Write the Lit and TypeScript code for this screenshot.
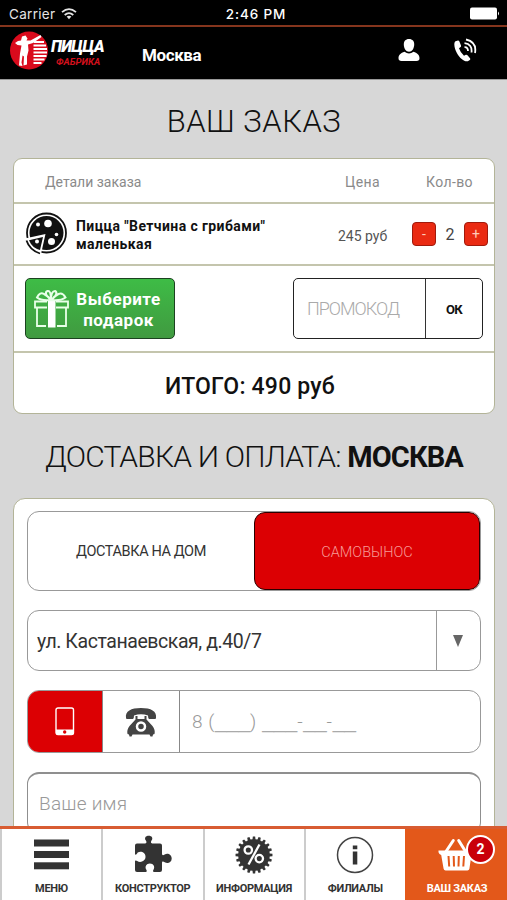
import { LitElement, html, css, svg } from "lit";
import { customElement, property } from "lit/decorators.js";
import { classMap } from "lit/directives/class-map.js";

const teeth = (n: number, outer: number, inner: number) => {
  const pts: string[] = [];
  for (let i = 0; i < n; i++) {
    for (const [f, r] of [[-0.3, inner], [-0.2, outer], [0.2, outer], [0.3, inner]]) {
      const a = ((i + f) / n) * Math.PI * 2;
      pts.push(`${(20 + r * Math.cos(a)).toFixed(2)},${(20 + r * Math.sin(a)).toFixed(2)}`);
    }
  }
  return pts.join(" ");
};

const icons: Record<string, unknown> = {
  menu: svg`<g fill="#333"><rect x="2" y="4.500" width="35" height="7"/><rect x="2" y="16" width="35" height="7"/><rect x="2" y="27.300" width="35" height="7"/></g>`,
  puzzle: svg`<path fill="#333" d="M2 10.500q0-2 2-2h8.200c1.600 0 1.500-1.700.7-2.900C11 3 12.600.7 15.700.7s4.700 2.300 2.800 4.900c-.8 1.200-.9 2.900.7 2.900H27q2 0 2 2v8.300c0 1.700 1.200 1.700 2.700.7 3-2 7 .2 7 4.100 0 3.900-4 5.700-7 3.700-1.500-1-2.700-1-2.700.7V35q0 2-2 2h-5.800c-1.600 0-1.300-1.500-.6-2.500 1.600-2.400 0-6-3.700-6s-5.300 3.600-3.700 6c.7 1 1 2.500-.6 2.500H4q-2 0-2-2v-8.500c0-1.300 1.200-1.300 2.200-.5 3 2.200 8.300.3 8.300-4.200s-4.800-6-7.800-4.200C3.200 20.500 2 20.200 2 18.800z"/>`,
  percent: svg`<polygon fill="#333" points=${teeth(20, 18.5, 15.8)}/><g fill="none" stroke="#fff" stroke-width="2.300"><circle cx="14.300" cy="15" r="3.700"/><circle cx="25.300" cy="23.600" r="3.700"/><path d="M25.500 9.500L14.500 29.500"/></g>`,
  info: svg`<circle cx="20" cy="20" r="17.500" fill="none" stroke="#444" stroke-width="1.500"/><path fill="#333" d="M17.800 10.500h4.500v3.800h-4.500zM17.800 16.500h4.500v13h-4.500z"/>`,
  basket: svg`<g fill="none" stroke="#fff" stroke-width="3"><path d="M8 18L16.300 5.500M29.500 18L21.700 5.500" stroke-linecap="round"/></g><path fill="#fff" d="M1.500 15.500h34.500q1 2.500-1.600 4.500l-2 13.800q-.3 1.700-2 1.700H8.600q-1.700 0-2-1.700L4.200 20Q1 18.500 1.500 15.500z"/><path stroke="#e3581a" stroke-width="2" d="M11.500 21l.7 10.500M16.700 21l.3 10.500M21.800 21l-.3 10.500M27 21l-.7 10.500"/>`,
};

@customElement("tab-item")
class TabItem extends LitElement {
  @property() icon = "";
  @property() label = "";
  @property() badge = "";
  @property({ type: Boolean }) active = false;
  static styles = css`
    :host { display: block; }
    .tab { box-sizing: border-box; height: 100%; display: flex; flex-direction: column; align-items: center; padding-top: 6px; border-left: 2px solid #ccc; background: #fff; color: #333; font: 700 11px/14px Roboto, sans-serif; letter-spacing: -0.3px; }
    .active { background: #e3581a; border-color: #e3581a; color: #fff; }
    .art { position: relative; width: 40px; height: 40px; margin-bottom: 7px; }
    .badge { position: absolute; left: 29px; top: 0; width: 25px; height: 25px; border: 2px solid #fff; border-radius: 50%; background: #c9000a; text-align: center; font-size: 14px; line-height: 25px; letter-spacing: 0; }
    svg { display: block; }
  `;
  render() {
    return html`<div class=${classMap({ tab: true, active: this.active })}>
      <div class="art"><svg width="40" height="40" viewBox="0 0 40 40">${icons[this.icon]}</svg>
        ${this.badge ? html`<span class="badge">${this.badge}</span>` : ""}</div>
      <span>${this.label}</span>
    </div>`;
  }
}

@customElement("app-root")
class AppRoot extends LitElement {
  static styles = css`
    :host { display: block; font-family: Roboto, "Liberation Sans", sans-serif; color: #111; }
    * { box-sizing: border-box; }
    svg { display: block; }
    .screen { width: 507px; height: 900px; overflow: hidden; display: flex; flex-direction: column; background: #d7d7d7; }
    .status { height: 25px; flex: none; background: #000; color: #e4e4e4; display: grid; grid-template-columns: 1fr auto 1fr; align-items: center; padding: 2px 7px 0 9px; font: 13.5px/16px Inter, sans-serif; }
    .carrier { display: flex; align-items: center; gap: 6px; letter-spacing: 0.3px; }
    .clock { font-weight: 500; letter-spacing: 0.9px; padding-left: 3px; color: #fff; }
    .battery { justify-self: end; }
    .header { height: 54px; flex: none; background: #000; border-top: 2px solid #85351d; display: flex; align-items: flex-start; color: #fff; }
    .logo { display: flex; margin: 3px 0 0 9px; width: 133px; }
    .brand { margin: 8px 0 0 2px; font: italic 900 16px/18px Roboto, sans-serif; letter-spacing: -0.7px; }
    .sub { margin-left: 7px; font: italic 700 9.500px/11px Roboto, sans-serif; letter-spacing: 0; color: #d3101c; }
    .city { margin-top: 18px; font: 700 17px/20px Roboto, sans-serif; letter-spacing: -0.4px; flex: 1; }
    .user { margin: 11px 33px 0 0; }
    .call { margin: 11px 30px 0 0; }
    .content { flex: 1; min-height: 0; overflow: hidden; border-top: 1px solid #999; padding: 0 12px 0 13px; }
    h1 { margin: 0; text-align: center; font-weight: 300; font-size: 31px; line-height: 40px; }
    .t1 { height: 78px; padding-top: 22px; letter-spacing: 0.5px; }
    .t2 { height: 84px; padding-top: 23px; letter-spacing: -0.8px; font-size: 30px; white-space: nowrap; }
    .t2 b { font-weight: 700; font-size: 29px; letter-spacing: -0.9px; }
    .card { background: #fff; border: 1.500px solid #b3b498; border-radius: 9px; }
    .row { border-bottom: 2px solid #c4c5ad; display: flex; align-items: center; }
    .head { height: 45px; padding: 2px 21px 0 31px; font-size: 14px; letter-spacing: 0.4px; color: #8a8a8a; }
    .head span:first-child { flex: 1; letter-spacing: 0; }
    .head span:nth-child(2) { margin-right: 46px; }
    .item { height: 62px; padding: 0 6px 0 11px; }
    .name { margin-left: 9px; flex: 1; font-weight: 700; font-size: 14px; line-height: 18px; letter-spacing: 0.4px; padding-top: 2px; white-space: nowrap; }
    .price { width: 74px; padding-top: 4px; font-size: 14px; color: #555; }
    .qty { width: 28px; text-align: center; font-size: 16px; color: #444; }
    .step { width: 24px; height: 24px; border: 1.500px solid #a01a0c; border-radius: 4px; background: #ea2a12; color: #ffc9b8; text-align: center; font: 14px/22px Roboto, sans-serif; }
    .promo { height: 87px; padding: 0 11px; justify-content: space-between; }
    .gift { width: 150px; height: 61px; border: 1.500px solid #1c4220; border-radius: 5px; background: linear-gradient(#3ebc46, #409a40); color: #fff; display: flex; align-items: center; padding-left: 7px; font: 700 17px/21px Roboto, sans-serif; letter-spacing: 0.5px; text-align: center; }
    .gift span { width: 89px; margin: 2px 0 0 4px; }
    .code { width: 190px; height: 61px; border: 1.500px solid #222; border-radius: 5px; display: flex; font-size: 18px; letter-spacing: -1px; font-weight: 300; color: #aaa; line-height: 60px; }
    .code span { flex: 1; padding-left: 13px; }
    .code b { width: 57px; border-left: 1.500px solid #333; text-align: center; color: #111; font-size: 13px; letter-spacing: -0.6px; font-weight: 700; line-height: 62px; }
    .total { height: 60px; line-height: 67px; text-align: center; font-size: 23px; letter-spacing: 0.2px; font-weight: 500; padding-right: 8px; }
    .form { border-radius: 12px; height: 420px; padding: 12px 12px 0 13px; display: flex; flex-direction: column; }
    .box { width: 454px; flex: none; border: 1.500px solid #999; border-radius: 12px; display: flex; align-items: center; overflow: hidden; }
    .toggle { height: 80px; margin-bottom: 19px; font-size: 14.500px; letter-spacing: -0.4px; color: #333; text-align: center; line-height: 80px; }
    .toggle span { flex: 1; padding-top: 2px; }
    .toggle .on { flex: 0 0 226px; padding-top: 0; letter-spacing: 0; height: 78px; border: 1.500px solid #2a0000; border-radius: 11px; background: #dc0003; color: #f79a96; font-weight: 300; }
    .select { height: 61px; margin-bottom: 19px; font-size: 19.500px; letter-spacing: -0.43px; color: #333; padding: 0 0 0 9px; }
    .select span { flex: 1; padding-top: 2px; }
    .arrow { width: 44px; height: 100%; border-left: 1.500px solid #999; display: grid; place-items: center; padding-right: 1px; }
    .phone { height: 63px; margin-bottom: 19px; }
    .mob { width: 74px; height: 100%; background: #dc0003; display: grid; place-items: center; }
    .land { width: 78px; height: 100%; border: solid #888; border-width: 0 1.500px; display: grid; place-items: center; }
    .hint { font-weight: 300; color: #999; font-size: 19px; padding-left: 11px; white-space: pre; }
    .phone .hint { letter-spacing: 0.6px; padding-left: 12px; }
    .u { font: 21px/20px "Liberation Sans", sans-serif; letter-spacing: 0; color: #aaa; }
    .nm { height: 62px; border-width: 1.900px; border-top-width: 2px; border-color: #8f8f8f; }
    .nm .hint { letter-spacing: 0.25px; line-height: 58px; }
    .tabs { height: 74px; flex: none; border-top: 3px solid #d85c32; display: grid; grid-template-columns: 101px 101.500px 101px 101.500px 102px; background: #fff; }
  `;

  render() {
    const blank = (n: number) => html`<span class="u">${"_".repeat(n)}</span>`;
    return html`<div class="screen">
      <div class="status">
        <div class="carrier">Carrier
          <svg width="16" height="12" viewBox="0 0 16 12" fill="none" stroke="#e4e4e4" stroke-width="1.800"><path d="M1 4.200Q8-2 15 4.200M3.700 7Q8 3.200 12.300 7"/><path fill="#e4e4e4" stroke="none" d="M5.600 8.600Q8 6.800 10.400 8.600L8 11.300z"/></svg>
        </div>
        <span class="clock">2:46 PM</span>
        <svg class="battery" width="30" height="13" viewBox="0 0 30 13" fill="#fff"><rect y=".5" width="27" height="12" rx="2"/><path d="M28 4.500q2 2 0 4z"/></svg>
      </div>
      <div class="header">
        <div class="logo">
          <svg width="40" height="40" viewBox="0 0 40 40"><circle cx="20" cy="20.500" r="19" fill="#da0a1c"/><path stroke="#fff" stroke-width="2" d="M25 12h10M24.500 15.500h12.500M24.500 19h13.500M24.500 22.500h13.500M24.500 26h13M24.500 29.500h11M24.500 33h8"/><path fill="#fff" d="M6 13l3-2 3-.5 1-4 3.500-1 2 3-1 2 4 0 10-5.500 1 2-8.500 6-5 1.500.500 6-1.500 6v8l-3.500 1 .500-9-1.500-1-1 7 1 3.500-3.500-.500 1-12 1.500-8-4-.5z"/></svg>
          <div><div class="brand">ПИЦЦА</div><div class="sub">ФАБРИКА</div></div>
        </div>
        <div class="city">Москва</div>
        <svg class="user" width="22" height="24" viewBox="0 0 22 24" fill="#fff"><path d="M11 1c3.500 0 5.500 2.200 5.200 6-.3 3.500-2 6.700-5.200 6.700S6.100 10.500 5.800 7C5.500 3.200 7.500 1 11 1z"/><path d="M6.500 13.800q4.500 3.400 9 0c3.700 1.200 6 3 6 6.500 0 2-1 2.700-3 2.700h-15c-2 0-3-.7-3-2.700 0-3.500 2.300-5.300 6-6.500z"/></svg>
        <svg class="call" width="24" height="24" viewBox="0 0 24 24"><path fill="#fff" d="M2.500 3.300L5 2.500q1 0 1.400 1l1.600 4q.3 1-.7 1.700L6 10.300q1.500 4.500 5 7.500l1.800-1q1-.4 1.700.4l2.500 3q.7 1-.2 1.700l-2 1.300c-3 1-7.800-2.700-10.800-8C1.400 10.500.300 5 2.500 3.300z"/><path fill="none" stroke="#fff" stroke-width="1.800" d="M11.500 9.200Q15 9 15 13M11.500 5.200Q19.500 6 18.500 14.500M13 1.500Q24 4 22 15"/></svg>
      </div>
      <div class="content">
        <h1 class="t1">ВАШ ЗАКАЗ</h1>
        <div class="card">
          <div class="row head"><span>Детали заказа</span><span>Цена</span><span>Кол-во</span></div>
          <div class="row item">
            <svg width="42" height="44" viewBox="0 0 42 44"><circle cx="21.500" cy="21" r="19.500" fill="#fff" stroke="#111" stroke-width="1.800"/><circle cx="21.500" cy="21" r="17" fill="#111"/><g fill="#fff"><circle cx="23" cy="11.500" r="3.800"/><circle cx="13" cy="12.500" r="2"/><circle cx="31.500" cy="22.500" r="1.800"/><circle cx="26.500" cy="29.500" r="3.500"/><path d="M0 26.500l20.500-4.500-4.500 20-8-1z"/></g><path fill="#111" d="M4 28.300l14-3.300-3 13Q7 36 4 28.300z"/><circle cx="12" cy="29.500" r="2" fill="#fff"/><path d="M1.500 28.500Q4.500 38 15 41.500" fill="none" stroke="#111" stroke-width="1.800"/></svg>
            <div class="name">Пицца "Ветчина с грибами"<br>маленькая</div>
            <span class="price">245 руб</span><span class="step">-</span><span class="qty">2</span><span class="step">+</span>
          </div>
          <div class="row promo">
            <div class="gift">
              <svg width="37" height="40" viewBox="0 0 37 40" fill="none" stroke="#e9ffe9" stroke-width="1.800"><path d="M14 12.500H2v6h12M23 12.500h12v6H23M4 18.500V37h9M33 18.500V37h-9"/><path fill="#fff" stroke="none" d="M15 12h7.500v26.500H15z"/><path stroke-width="2" d="M18 11Q8 12 4 8.500q3-6 7-3.500 4 2 7 6Q10 4 14.500 2q3.500-1 3.500 9 0-9 4-9 4 2-3.500 9 3-4 7-6t7 3.500Q28 12 18 11"/></svg>
              <span>Выберите<br>подарок</span>
            </div>
            <div class="code"><span>ПРОМОКОД</span><b>ОК</b></div>
          </div>
          <div class="total">ИТОГО: 490 руб</div>
        </div>
        <h1 class="t2">ДОСТАВКА И ОПЛАТА: <b>МОСКВА</b></h1>
        <div class="card form">
          <div class="box toggle"><span>ДОСТАВКА НА ДОМ</span><span class="on">САМОВЫНОС</span></div>
          <div class="box select"><span>ул. Кастанаевская, д.40/7</span>
            <div class="arrow"><svg width="10" height="12" viewBox="0 0 10 12"><path fill="#666" d="M0 0h10L5 12z"/></svg></div></div>
          <div class="box phone">
            <div class="mob"><svg width="20" height="30" viewBox="0 0 20 30"><rect x="1" y="1" width="17.500" height="26.500" rx="2" fill="none" stroke="#fff" stroke-width="1.400"/><path fill="#fff" d="M1 22.500h17.500v5H1z"/><circle cx="9.700" cy="25" r="1.700" fill="#dc0003"/></svg></div>
            <div class="land"><svg width="32" height="30" viewBox="0 0 32 30"><path fill="#444" d="M1 11C0 4 6 1 16 1s16 3 15 10q0 1-1 1h-6q-1-.5-1-3.500Q16 6 9 8.500q0 3-1 3.500H2q-1 0-1-1z"/><path fill="#444" d="M10.500 9h2v3h7V9h2v3.500l6 6.500q3 4 2 8l-1.500.5-.5 2h-2l-1-2h-17l-1 2h-2L4 27.500 2.500 27q-1-4 2-8l6-6.500z"/><circle cx="16" cy="19.500" r="4" fill="#444" stroke="#fff" stroke-width="2.500"/></svg></div>
            <span class="hint">8 (${blank(3)}) ${blank(3)}-${blank(2)}-${blank(2)}</span>
          </div>
          <div class="box nm"><span class="hint">Ваше имя</span></div>
        </div>
      </div>
      <div class="tabs">
        <tab-item icon="menu" label="МЕНЮ"></tab-item>
        <tab-item icon="puzzle" label="КОНСТРУКТОР"></tab-item>
        <tab-item icon="percent" label="ИНФОРМАЦИЯ"></tab-item>
        <tab-item icon="info" label="ФИЛИАЛЫ"></tab-item>
        <tab-item icon="basket" label="ВАШ ЗАКАЗ" badge="2" active></tab-item>
      </div>
    </div>`;
  }
}
